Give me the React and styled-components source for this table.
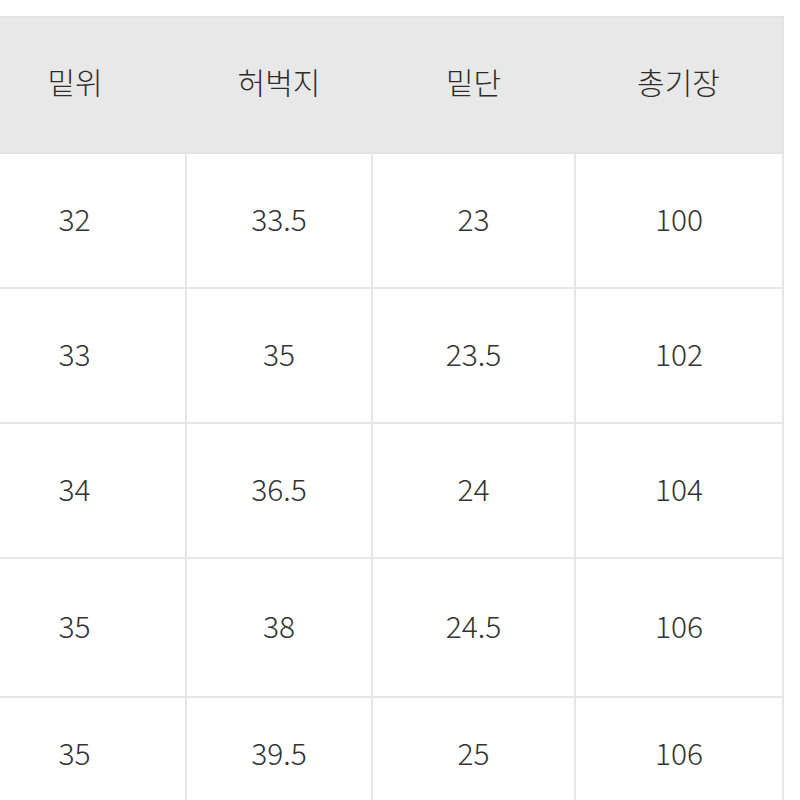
import React from 'react'
import styled, { createGlobalStyle } from 'styled-components'

const GlobalStyle = createGlobalStyle`
  html, body {
    margin: 0;
    padding: 0;
    background: #ffffff;
    overflow: hidden;
  }
  body {
    font-family: "Noto Sans CJK KR", "Noto Sans", sans-serif;
    color: #333333;
  }
`

const Page = styled.div`
  width: 800px;
  height: 800px;
  overflow: hidden;
  padding-top: 16px;
  box-sizing: border-box;
`

const Table = styled.table`
  margin-left: -36px;
  border-collapse: collapse;
  table-layout: fixed;
  width: 819px;
`

const HeadCell = styled.th`
  height: 126px;
  background: #e8e8e8;
  border-top: 2px solid #e2e2e2;
  border-bottom: 2px solid #e2e2e2;
  border-right: ${(props) => (props.last ? '2px solid #e4e4e4' : 'none')};
  font-size: 30px;
  font-weight: 300;
  color: #2c2c2c;
  text-align: center;
  vertical-align: middle;
  padding: 0 0 8px;
`

const Row = styled.tr`
  height: ${(props) => props.$h}px;
`

const Cell = styled.td`
  border: 2px solid #e6e6e6;
  border-left: ${(props) => (props.first ? 'none' : '2px solid #e6e6e6')};
  font-size: 30px;
  font-weight: 300;
  color: #333333;
  text-align: center;
  vertical-align: middle;
  padding: 0 0 6px;
`

const columns = [
  { label: '밑위', width: 222 },
  { label: '허벅지', width: 186 },
  { label: '밑단', width: 203 },
  { label: '총기장', width: 208 },
]

const rows = [
  { h: 135, cells: ['32', '33.5', '23', '100'] },
  { h: 135, cells: ['33', '35', '23.5', '102'] },
  { h: 135, cells: ['34', '36.5', '24', '104'] },
  { h: 139, cells: ['35', '38', '24.5', '106'] },
  { h: 116, cells: ['35', '39.5', '25', '106'] },
]

const App = () => {
  return (
    <Page>
      <GlobalStyle />
      <Table>
        <colgroup>
          {columns.map((col) => (
            <col key={col.label} style={{ width: col.width }} />
          ))}
        </colgroup>
        <thead>
          <tr>
            {columns.map((col, i) => (
              <HeadCell key={col.label} last={i === columns.length - 1}>
                {col.label}
              </HeadCell>
            ))}
          </tr>
        </thead>
        <tbody>
          {rows.map((row, r) => (
            <Row key={r} $h={row.h}>
              {row.cells.map((val, i) => (
                <Cell key={i} first={i === 0}>
                  {val}
                </Cell>
              ))}
            </Row>
          ))}
        </tbody>
      </Table>
    </Page>
  )
}

export default App
